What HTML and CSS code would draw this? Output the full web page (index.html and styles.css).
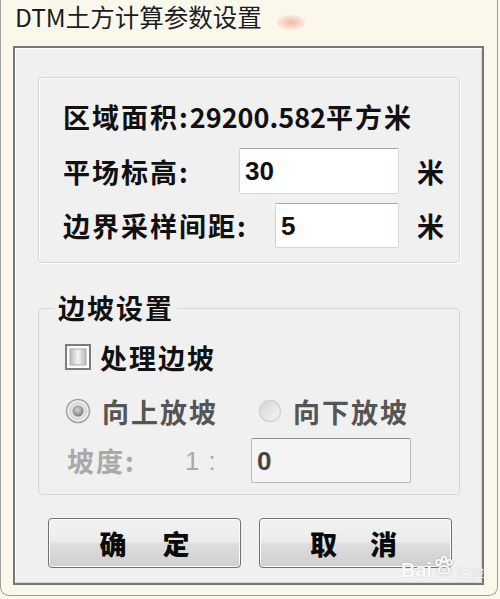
FILE: index.html
```html
<!DOCTYPE html>
<html lang="zh-CN">
<head>
<meta charset="utf-8">
<title>DTM土方计算参数设置</title>
<link rel="stylesheet" href="styles.css">
</head>
<body>
<div class="window">
  <div class="titlebar">
    <span class="title">DTM土方计算参数设置</span>
    <span class="blob"></span>
  </div>
  <div class="client">
    <div class="group group1">
      <div class="row">区域面积:<span class="num">29200.582</span>平方米</div>
      <div class="row">
        <span class="label">平场标高:</span>
        <div class="input w160">30</div>
        <span class="unit">米</span>
      </div>
      <div class="row row-last">
        <span class="label">边界采样间距:</span>
        <div class="input w124">5</div>
        <span class="unit">米</span>
      </div>
    </div>

    <fieldset class="group2">
      <legend>边坡设置</legend>
      <div class="slope">
        <div class="check-row">
          <svg class="checkbox" width="26" height="26" viewBox="0 0 26 26">
            <defs>
              <linearGradient id="cb" x1="0" y1="0" x2="1" y2="0">
                <stop offset="0" stop-color="#b9b9b9"/>
                <stop offset="0.5" stop-color="#f4f4f4"/>
                <stop offset="1" stop-color="#b9b9b9"/>
              </linearGradient>
            </defs>
            <rect x="1" y="1" width="24" height="24" fill="#fdfdfd" stroke="#7c7c7c" stroke-width="2"/>
            <rect x="5" y="5" width="16" height="16" fill="url(#cb)" stroke="#a9a9a9" stroke-width="1"/>
          </svg>
          <span>处理边坡</span>
        </div>
        <div class="radio-row">
          <div class="radio-opt">
            <svg width="26" height="26" viewBox="0 0 26 26">
              <defs>
                <radialGradient id="rd" cx="0.45" cy="0.4" r="0.6">
                  <stop offset="0" stop-color="#d6d6d6"/>
                  <stop offset="1" stop-color="#7d7d7d"/>
                </radialGradient>
              </defs>
              <circle cx="13" cy="13" r="11.5" fill="#f2f2f2" stroke="#a4a4a4" stroke-width="1.6"/>
              <circle cx="13" cy="13" r="8.5" fill="#e2e2e2" stroke="#d0d0d0" stroke-width="1"/>
              <circle cx="13" cy="13" r="5.5" fill="url(#rd)"/>
            </svg>
            <span>向上放坡</span>
          </div>
          <div class="radio-opt opt2">
            <svg width="24" height="24" viewBox="0 0 24 24">
              <defs>
                <linearGradient id="r2" x1="0" y1="0" x2="1" y2="1">
                  <stop offset="0" stop-color="#d4d4d4"/>
                  <stop offset="1" stop-color="#f7f7f7"/>
                </linearGradient>
              </defs>
              <circle cx="12" cy="12" r="10.5" fill="url(#r2)" stroke="#d2d2d2" stroke-width="1.4"/>
            </svg>
            <span>向下放坡</span>
          </div>
        </div>
        <div class="ratio-row">
          <span class="ratio-label">坡度:</span>
          <span class="ratio-one">1:</span>
          <div class="input disabled w160">0</div>
        </div>
      </div>
    </fieldset>

    <div class="buttons">
      <div class="btn"><span>确</span><span>定</span></div>
      <div class="btn btn-cancel"><span>取</span><span>消</span></div>
    </div>
  </div>
  <div class="watermark">
    <span class="wm-bai">Bai</span>
    <svg class="wm-paw" width="22" height="22" viewBox="0 0 24 24">
      <g fill="none" stroke="#ffffff" stroke-width="2">
        <ellipse cx="6" cy="8" rx="2.5" ry="3"/>
        <ellipse cx="12" cy="4.5" rx="2.5" ry="3"/>
        <ellipse cx="18" cy="8" rx="2.5" ry="3"/>
        <path d="M6 20 C6 14 9 12 12 12 C15 12 18 14 18 20 Z"/>
      </g>
    </svg>
    <span class="wm-jy">经验</span>
  </div>
</div>
</body>
</html>
```

FILE: styles.css
```css
body {
  margin: 0;
  background: #faf8ea;
  font-family: "Noto Sans CJK SC", "Liberation Sans", sans-serif;
}

.window {
  position: relative;
  width: 498px;
  height: 596px;
  box-sizing: border-box;
  border: 1px solid #9d9d9d;
  border-top: none;
  border-radius: 0 0 9px 9px;
  background: #faf8ea;
}

.titlebar {
  height: 46px;
  box-sizing: border-box;
  padding: 1px 0 0 14px;
}

.title {
  font-size: 24.5px;
  line-height: 32px;
  color: #1c1c1c;
  text-shadow: 0 0 4px rgba(255, 255, 255, 0.9);
}

.blob {
  position: absolute;
  left: 276px;
  top: 15px;
  width: 28px;
  height: 15px;
  border-radius: 50%;
  background: radial-gradient(ellipse at center, rgba(240, 140, 120, 0.6) 0%, rgba(245, 170, 150, 0.3) 55%, rgba(250, 248, 234, 0) 100%);
}

.client {
  margin-left: 12px;
  width: 471px;
  height: 539px;
  box-sizing: border-box;
  border: 2px solid #767676;
  box-shadow: inset 1px 1px 0 #fdfdfd, inset -1px -1px 0 #d8d8d8;
  background: #f0f0f0;
  padding: 29px 22px 0 23px;
}

.group1 {
  border: 1px solid #d6d6d6;
  border-radius: 4px;
  box-shadow: inset 1px 1px 0 #fdfdfd, 1px 1px 0 #fdfdfd;
  padding: 15px 15px 14px 24px;
  display: flex;
  flex-direction: column;
  gap: 9px;
}

.row {
  height: 46px;
  display: flex;
  align-items: center;
  font-size: 27px;
  font-weight: 700;
  letter-spacing: 2px;
  line-height: 1;
  color: #111111;
}

.row-last {
  height: 45px;
}

.num {
  letter-spacing: 0;
}

.input {
  height: 100%;
  box-sizing: border-box;
  background: #ffffff;
  border: 1px solid #d3d8de;
  border-top-color: #a3a7ad;
  border-left-color: #cfd3d9;
  border-radius: 2px;
  display: flex;
  align-items: center;
  padding-left: 5px;
  font-family: "Liberation Sans", sans-serif;
  font-size: 26px;
  font-weight: 700;
  letter-spacing: 0;
  color: #111111;
}

.row .input {
  margin-left: auto;
}

.w160 {
  width: 160px;
}

.w124 {
  width: 124px;
}

.unit {
  margin-left: 18px;
  letter-spacing: 0;
}

.group2 {
  margin: 29px 0 0;
  padding: 0 0 11px 0;
  border: 1px solid #d6d6d6;
  border-radius: 4px;
  min-width: 0;
}

.group2 legend {
  margin-left: 16px;
  padding: 0 3px;
  font-size: 27px;
  font-weight: 700;
  letter-spacing: 2px;
  line-height: 32px;
  color: #111111;
}

.slope {
  padding: 18px 0 0 26px;
  font-size: 27px;
  font-weight: 700;
  letter-spacing: 2px;
  line-height: 1;
}

.check-row {
  height: 30px;
  display: flex;
  align-items: center;
  gap: 9px;
  color: #111111;
}

.radio-row {
  height: 30px;
  margin-top: 24px;
  display: flex;
  align-items: center;
  gap: 40px;
  color: #555555;
}

.radio-opt {
  display: flex;
  align-items: center;
  gap: 11px;
}

.ratio-row {
  height: 45px;
  margin-top: 12px;
  display: flex;
  align-items: center;
  color: #a9a9a9;
}

.ratio-label {
  width: 120px;
  padding-left: 2px;
  box-sizing: border-box;
}

.ratio-one {
  width: 66px;
  letter-spacing: 9px;
  font-family: "Liberation Sans", sans-serif;
  font-weight: 400;
  font-size: 26px;
}

.input.disabled {
  background: #f4f4f4;
  border-color: #b8b8b8;
  border-top-color: #8e8e8e;
  color: #454545;
}

.buttons {
  margin: 23px 0 0 10px;
  display: flex;
  gap: 18px;
}

.btn {
  width: 193px;
  height: 50px;
  box-sizing: border-box;
  border: 1px solid #727272;
  border-radius: 4px;
  box-shadow: inset 0 0 0 1px #fbfbfb;
  background: linear-gradient(#f3f3f3 0%, #ebebeb 48%, #dddddd 52%, #cfcfcf 100%);
  display: flex;
  align-items: center;
  justify-content: center;
  gap: 36px;
  font-size: 27px;
  font-weight: 900;
  color: #0a0a0a;
  line-height: 1;
}

.btn-cancel {
  gap: 33px;
  padding-right: 4px;
}

.watermark {
  position: absolute;
  left: 400px;
  top: 549px;
  display: flex;
  align-items: center;
  gap: 1px;
  opacity: 0.9;
  color: #ffffff;
  text-shadow: 0 0 1px #a0a0a0;
}

.wm-bai {
  font-family: "Liberation Sans", sans-serif;
  font-size: 20px;
  font-weight: 700;
  padding-top: 10px;
}

.wm-paw {
  filter: drop-shadow(0 0 1px #a0a0a0);
}

.wm-jy {
  font-size: 14px;
  padding-top: 10px;
}
```
